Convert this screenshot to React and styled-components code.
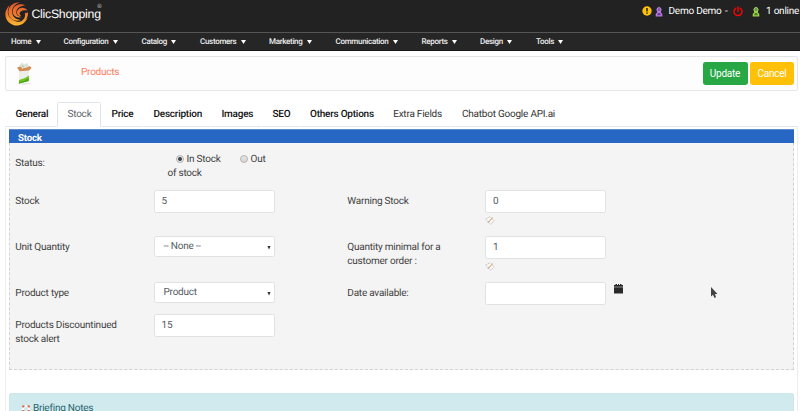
import React from "react";
import styled, { createGlobalStyle } from "styled-components";

const GlobalStyle = createGlobalStyle`
  *, *::before, *::after { box-sizing: border-box; }
  html, body { margin: 0; overflow: hidden; }
  body {
    background: #fff;
    color: #3f3f3f;
    font: 400 10px/14.4px Roboto, "Liberation Sans", sans-serif;
    letter-spacing: -0.23px;
    text-rendering: geometricPrecision;
  }
  svg { display: block; }
`;

const Page = styled.div`
  width: 800px;
  height: 411px;
  overflow: hidden;
  display: flex;
  flex-direction: column;
`;

const Header = styled.header`
  height: 32px;
  flex: none;
  display: flex;
  justify-content: space-between;
  background: #222;
  color: #fff;
`;

const Brand = styled.div`
  display: flex;
  padding: 2px 0 0 5px;
`;

const BrandName = styled.span`
  margin: 5px 0 0 2.5px;
  font: 400 12.3px/14px "Liberation Sans", Arial, sans-serif;
  letter-spacing: -0.27px;
`;

const Registered = styled.sup`
  margin: 2px 0 0 -3.5px;
  font: 400 6px/6px "Liberation Sans", Arial, sans-serif;
  color: #ccc;
`;

const Session = styled.div`
  display: flex;
  width: 158px;
  height: 22px;
  align-items: center;
`;

const Slot = styled.span`
  width: ${(p) => p.$w}px;
  padding-top: ${(p) => (p.$text ? 2 : 0)}px;
  flex: none;
  white-space: nowrap;
`;

const Nav = styled.nav`
  height: 19px;
  flex: none;
  display: flex;
  align-items: center;
  padding: 0 0 0 11px;
  background: #262626;
  border-top: 1px solid #555;
  border-bottom: 1px solid #151515;
`;

const NavItem = styled.a`
  width: ${(p) => p.$w}px;
  display: flex;
  align-items: center;
  gap: 4.3px;
  color: #eee;
  font-size: 8px;
  font-weight: 500;
  letter-spacing: -0.3px;
  line-height: 16px;
  white-space: nowrap;
`;

const TitleCard = styled.section`
  height: 35px;
  flex: none;
  margin: 5px 2px 0 5px;
  padding: 0 3px 0 10px;
  display: flex;
  align-items: center;
  background: #fdfdfd;
  border: 1px solid #e6e6e6;
  border-radius: 2px;
`;

const Title = styled.h1`
  margin: 0 auto 0 47px;
  color: #ff7b5c;
  font-size: 10px;
  font-weight: 400;
`;

const Button = styled.button`
  width: ${(p) => p.$w}px;
  height: 22.5px;
  margin-left: 2.5px;
  padding: 2px 0 0;
  border: 0;
  border-radius: 2.4px;
  background: ${(p) => p.$bg};
  color: #fff;
  font: inherit;
  letter-spacing: inherit;
`;

const Tabs = styled.div`
  height: 25px;
  flex: none;
  margin: 11px 2px 0 5px;
  display: flex;
  border-bottom: 1px solid #dee9ee;
`;

const Tab = styled.a`
  width: ${(p) => p.$w}px;
  height: 25px;
  flex: none;
  padding: 5px 0 0 9.5px;
  white-space: nowrap;
  color: ${(p) => (p.$active ? "#5d646b" : p.$soft ? "#333" : "#111")};
  font-weight: ${(p) => (p.$active || p.$soft ? 400 : 500)};
  background: #fff;
  border: 1px solid ${(p) => (p.$active ? "#dee5ea" : "transparent")};
  border-bottom-color: ${(p) => (p.$active ? "#fff" : "#dee9ee")};
  border-radius: 2.4px 2.4px 0 0;
`;

const Content = styled.main`
  flex: 1;
  margin: 0 2px 0 5px;
  padding: 2px 3px 0;
  border: solid #eee;
  border-width: 0 1px;
`;

const PanelTitle = styled.h2`
  height: 14px;
  margin: 0;
  padding-left: 9px;
  background: #2767c3;
  border-top: 1px solid #5b8bd2;
  color: #fff;
  font-size: 9.7px;
  font-weight: 700;
  line-height: 18px;
`;

const Panel = styled.form`
  height: 227px;
  padding: 9px 0 0 5px;
  background: #f4f4f4;
  border: 1px dashed #d3d3d3;
  border-top: 0;
`;

const Row = styled.div`
  height: ${(p) => p.$h}px;
  display: grid;
  grid-template-columns: 138.5px 193.5px 138px 133.300px 1fr;
  align-items: start;
`;

const Label = styled.label`
  width: 110px;
  padding: 5px 0 0 0.3px;
`;

const Radios = styled.div`
  padding: 1px 0 0 14px;
`;

const Choices = styled.div`
  height: 14px;
  display: flex;
  padding-left: 8px;
`;

const Choice = styled.span`
  width: 64px;
  display: flex;
  align-items: center;
`;

const Radio = styled.i`
  width: 8px;
  height: 8px;
  margin: -3px 3px 0 0;
  border: 1px solid #b3b3b3;
  border-radius: 50%;
  background: ${(p) =>
    p.$on ? "radial-gradient(circle, #444 0 1.5px, #e8e8e8 2.4px)" : "linear-gradient(#e6e6e6, #d4d4d4)"};
`;

const Field = styled.div`
  width: 121px;
  display: flex;
  flex-direction: column;
  gap: 3px;
`;

const Control = styled.div`
  height: ${(p) => (p.$select ? 21 : 23)}px;
  padding: ${(p) => (p.$select ? 2 : 1)}px 3px 0 ${(p) => (p.$select ? 9 : 7)}px;
  display: flex;
  align-items: center;
  justify-content: space-between;
  background: #fff;
  border: 1px solid #dfe2e5;
  border-radius: 2.4px;
  color: #555c63;
`;

const Notes = styled.aside`
  height: 30px;
  margin-top: 23px;
  padding: 8px 0 0 12px;
  display: flex;
  gap: 3px;
  background: #d1eaee;
  border: 1px solid #c9e7ec;
  border-radius: 2.4px;
  color: #27656f;
`;

const IconBox = styled.span`
  display: block;
  margin: ${(p) => p.$m || 0};
`;

const Pointer = styled.svg`
  position: absolute;
  left: 710px;
  top: 286px;
`;

const Logo = () => (
  <svg width="24" height="25" viewBox="0 0 24 25" fill="none" strokeLinecap="round">
    <defs>
      <linearGradient id="flame" x1="0" y1="0" x2="0" y2="25" gradientUnits="userSpaceOnUse">
        <stop offset="0" stopColor="#e0552f" />
        <stop offset=".5" stopColor="#ee7a2e" />
        <stop offset="1" stopColor="#ffc02e" />
      </linearGradient>
    </defs>
    <g fill="url(#flame)">
      <path d="M5 3C-1 8-1 16 4 20.500c6 5.500 15 3.500 18.500-4.500-4 4-10 5-14.500 2C2 15 1.500 9 5 3z" />
      <path d="M15 .5C8-.5 2.500 5 3.500 11.500c1 6 7 8.500 12.500 6.500-5-.5-8-2.500-8.800-7C6.500 6 9.500 2 15 .5z" />
      <path d="M20.500 3.500C15.500.5 8.500 3 7.700 8.500c-.7 5 4 8 9 6.500-4-.5-6-2.500-5.200-6 1-4 5.500-5.500 9-5.500z" />
      <path d="M22.500 8.500C20 4.500 14 4.800 12.200 9c-1 3.500 1.500 5.500 4 4.500-2-.8-2-2.500-.7-3.800 2-1.500 5-1.700 7-1.200z" />
      <path d="M23 10.500c.5 6-3.500 9.500-8 9 4-1.500 5.500-4 5-8.500z" />
    </g>
  </svg>
);

const Caret = () => (
  <svg width="5" height="4" viewBox="0 0 5 4"><path d="M0 0h5L2.500 4z" fill="#fff" /></svg>
);

const SelectArrow = () => (
  <svg width="4" height="4" viewBox="0 0 4 4"><path d="M.2 0h3.600L2 4z" fill="#333" transform="translate(0 -.5)" /></svg>
);

const Alert = () => (
  <svg width="10" height="10" viewBox="0 0 10 10">
    <circle cx="5" cy="5" r="4.700" fill="#ffc107" />
    <path d="M5 2v3.400M5 6.500v1.300" stroke="#222" strokeWidth="1.500" />
  </svg>
);

const Person = ({ light, dark }) => (
  <svg width="8" height="11" viewBox="0 0 8 11">
    <path d="M.7 10.500V8L2.300 6.200 1.300 3.500Q4-2 6.700 3.500L5.700 6.200 7.300 8v2.500z" fill={light} />
    <circle cx="4" cy="3.200" r="1.500" fill={dark} />
    <path d="M2.500 3h1M4.500 3h1" stroke="#fff" strokeWidth=".8" />
    <path d="M2 9.300L3 7h2l1 2.300z" fill={dark} />
  </svg>
);

const Power = () => (
  <svg width="10" height="11" viewBox="0 0 10 11" fill="none" stroke="#f00505" strokeWidth="1.500" strokeLinecap="round">
    <path d="M5 .9v4.300M2.700 2.300a4 4 0 1 0 4.600 0" />
  </svg>
);

const Bag = () => (
  <svg width="18" height="24" viewBox="0 0 18 24">
    <ellipse cx="8" cy="21.500" rx="7" ry="1.200" fill="#e7e7e7" />
    <path d="M3 8l10-1-.5 12-9.500 2.500z" fill="#eceeea" />
    <path d="M3 18q6-1 10-4.500l-.3 5.500-9.700 2.500z" fill="#72c424" />
    <path d="M3 20q6-1 9.800-4l-.1 3-9.700 2.500z" fill="#4ea511" />
    <path d="M3 4l3-3.500 2 2 3-1.500 2 3-1 4H4z" fill="#dce3d7" />
    <path d="M5 5l2-2 1 3 3-2-2 4H6z" fill="#a9be9b" />
    <path d="M1 5.500l3.500-1L6 6.500l5-1 3-1.500 1.500 2L13 8.500l-9.500.7z" fill="#d58b55" />
    <path d="M5 4l3 1.500 3-2-.5 2L6 6.500z" fill="#e1e8dc" />
  </svg>
);

const Edit = () => (
  <svg width="10" height="9" viewBox="0 0 10 9" fill="none">
    <path d="M.7 3L5 .7 9.300 5 5.500 8.300z" fill="#f9f9f9" stroke="#b8b8b8" strokeWidth=".8" strokeDasharray="1.500 .6" />
    <path d="M3.700 6L7.700 1.500" stroke="#dfab72" strokeWidth="1.100" />
    <path d="M3.200 6.500l.8-1" stroke="#888" />
  </svg>
);

const Calendar = () => (
  <svg width="9" height="10" viewBox="0 0 9 10">
    <path d="M1.500 0h1.500v1h1V0h1v1h1V0h1.500v1H9v1.700H0V1h1.500zM0 3.200h9V9.500H0z" fill="#292929" />
  </svg>
);

const Help = () => (
  <svg width="8" height="8" viewBox="0 0 8 8" fill="none">
    <circle cx="4" cy="4" r="3" stroke="#fff" strokeWidth="1.600" />
    <path d="M.5 1.200h2M5.500 1.200h2M.5 6.200h2M5.500 6.200h2M1 .5v2M7 .5v2M1 5v2M7 5v2" stroke="#df462a" strokeWidth="1.300" />
  </svg>
);

const NAV = [
  ["Home", 52.5], ["Configuration", 78], ["Catalog", 58.5], ["Customers", 69], ["Marketing", 66.5],
  ["Communication", 86], ["Reports", 58.5], ["Design", 56], ["Tools", 40],
];

const TABS = [
  ["General", 52], ["Stock", 44, "active"], ["Price", 42], ["Description", 68], ["Images", 51],
  ["SEO", 37.5], ["Others Options", 83.2], ["Extra Fields", 68.8, "soft"], ["Chatbot Google API.ai", 112, "soft"],
];

export default function App() {
  return (
    <Page>
      <GlobalStyle />
      <Header>
        <Brand>
          <Logo />
          <BrandName>ClicShopping</BrandName>
          <Registered>®</Registered>
        </Brand>
        <Session>
          <Slot $w={13}><Alert /></Slot>
          <Slot $w={13.5}><Person light="#b67ce0" dark="#6d35a0" /></Slot>
          <Slot $text $w={56.5}>Demo Demo</Slot>
          <Slot $text $w={8}>-</Slot>
          <Slot $w={19}><Power /></Slot>
          <Slot $w={14}><Person light="#9fd04e" dark="#4b7d22" /></Slot>
          <Slot $text $w={34}>1 online</Slot>
        </Session>
      </Header>
      <Nav>
        {NAV.map(([name, w]) => (
          <NavItem key={name} $w={w}>{name}<Caret /></NavItem>
        ))}
      </Nav>
      <TitleCard>
        <Bag />
        <Title>Products</Title>
        <Button type="button" $w={45} $bg="#28a745">Update</Button>
        <Button type="button" $w={44} $bg="#ffc107">Cancel</Button>
      </TitleCard>
      <Tabs>
        {TABS.map(([name, w, kind]) => (
          <Tab key={name} $w={w} $active={kind === "active"} $soft={kind === "soft"}>{name}</Tab>
        ))}
      </Tabs>
      <Content>
        <PanelTitle>Stock</PanelTitle>
        <Panel>
          <Row $h={38}>
            <Label>Status:</Label>
            <Radios>
              <Choices>
                <Choice><Radio $on />In Stock</Choice>
                <Choice><Radio />Out</Choice>
              </Choices>
              of stock
            </Radios>
          </Row>
          <Row $h={46}>
            <Label>Stock</Label>
            <Field><Control>5</Control></Field>
            <Label>Warning Stock</Label>
            <Field><Control>0</Control><Edit /></Field>
          </Row>
          <Row $h={46}>
            <Label>Unit Quantity</Label>
            <Field><Control $select>-- None --<SelectArrow /></Control></Field>
            <Label>Quantity minimal for a customer order :</Label>
            <Field><Control>1</Control><Edit /></Field>
          </Row>
          <Row $h={32}>
            <Label>Product type</Label>
            <Field><Control $select>Product<SelectArrow /></Control></Field>
            <Label>Date available:</Label>
            <Field><Control /></Field>
            <IconBox $m="2px 0 0 -4px"><Calendar /></IconBox>
          </Row>
          <Row $h={40}>
            <Label>Products Discountinued stock alert</Label>
            <Field><Control>15</Control></Field>
          </Row>
        </Panel>
        <Notes>
          <IconBox $m="3px 0 0"><Help /></IconBox>
          Briefing Notes
        </Notes>
      </Content>
      <Pointer width="8" height="13" viewBox="0 0 8 13">
        <path d="M1 1v9.500l2-1.800L4.500 12l1.500-.7L5 8h2.500z" fill="#444" />
      </Pointer>
    </Page>
  );
}
